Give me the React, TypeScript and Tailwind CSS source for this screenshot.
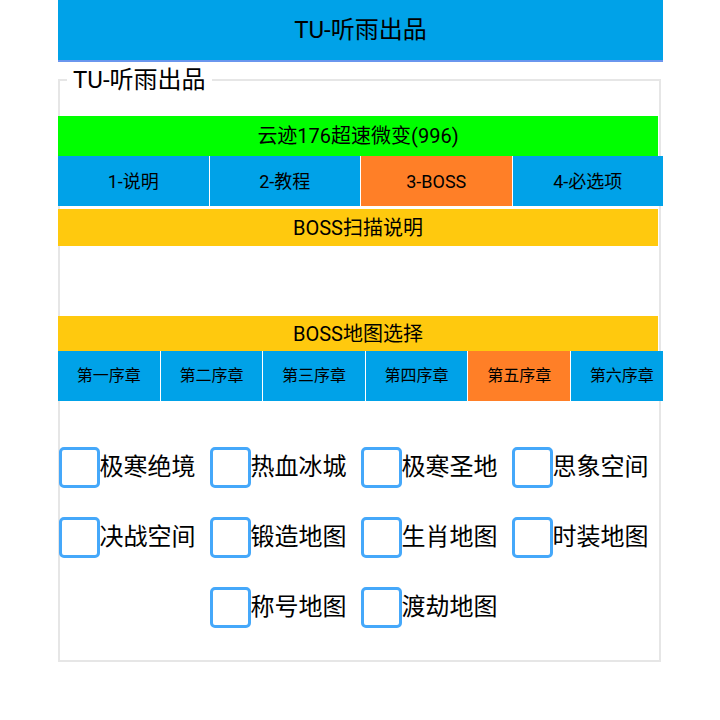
import React from "react";

const mainTabs = ["1-说明", "2-教程", "3-BOSS", "4-必选项"];
const chapters = ["第一序章", "第二序章", "第三序章", "第四序章", "第五序章", "第六序章"];
const maps = [
  "极寒绝境",
  "热血冰城",
  "极寒圣地",
  "思象空间",
  "决战空间",
  "锻造地图",
  "生肖地图",
  "时装地图",
  "称号地图",
  "渡劫地图",
];

export default function App() {
  const [tab, setTab] = React.useState(2);
  const [chapter, setChapter] = React.useState(4);
  const [checked, setChecked] = React.useState<Record<string, boolean>>({});

  return (
    <div
      className="min-h-[720px] bg-white text-black"
      style={{ fontFamily: 'Roboto, "Noto Sans CJK SC", sans-serif' }}
    >
      <div className="ml-[58px] w-[605px]">
        <div className="flex h-[62px] items-center justify-center border-b-2 border-[#6a96ee] bg-[#00a2e8] text-[24px]">
          TU-听雨出品
        </div>

        <fieldset className="mt-[3px] w-[603px] min-w-0 border-2 border-[#e6e6e6]">
          <legend className="ml-[7px] px-[6px] text-[24px] leading-[30px]">
            TU-听雨出品
          </legend>

          <div className="mt-[21px] -ml-[2px] flex h-[40px] w-[600px] items-center justify-center bg-[#00ff00] text-[20px]">
            云迹176超速微变(996)
          </div>

          <div className="-ml-[2px] flex h-[50px] w-[605px] gap-px bg-white">
            {mainTabs.map((t, i) => (
              <button
                key={t}
                onClick={() => setTab(i)}
                className={
                  "flex flex-1 items-center justify-center text-[18px] " +
                  (i === tab ? "bg-[#ff7f27]" : "bg-[#00a2e8]")
                }
              >
                {t}
              </button>
            ))}
          </div>

          <div className="mt-[3px] -ml-[2px] flex h-[37px] w-[600px] items-center justify-center bg-[#ffc90e] text-[20px]">
            BOSS扫描说明
          </div>

          <div className="mt-[70px] -ml-[2px] flex h-[35px] w-[600px] items-center justify-center bg-[#ffc90e] text-[20px]">
            BOSS地图选择
          </div>

          <div className="-ml-[2px] flex h-[50px] w-[605px] gap-px overflow-hidden bg-white">
            {chapters.map((c, i) => (
              <button
                key={c}
                onClick={() => setChapter(i)}
                className={
                  "flex w-[101.6px] shrink-0 items-center justify-center text-[16px] " +
                  (i === chapter ? "bg-[#ff7f27]" : "bg-[#00a2e8]")
                }
              >
                {c}
              </button>
            ))}
          </div>

          <div className="-ml-[2px] flex w-[605px] flex-wrap justify-center gap-y-[29px] pt-[46px] pb-[32px]">
            {maps.map((m) => (
              <label key={m} className="flex w-[151px] cursor-pointer items-center">
                <span
                  onClick={() => setChecked({ ...checked, [m]: !checked[m] })}
                  className={
                    "h-[41px] w-[41px] shrink-0 rounded-[5px] border-[3px] border-[#45a8fa] " +
                    (checked[m] ? "bg-[#45a8fa]" : "bg-white")
                  }
                />
                <span className="text-[24px] leading-[41px]">{m}</span>
              </label>
            ))}
          </div>
        </fieldset>
      </div>
    </div>
  );
}
